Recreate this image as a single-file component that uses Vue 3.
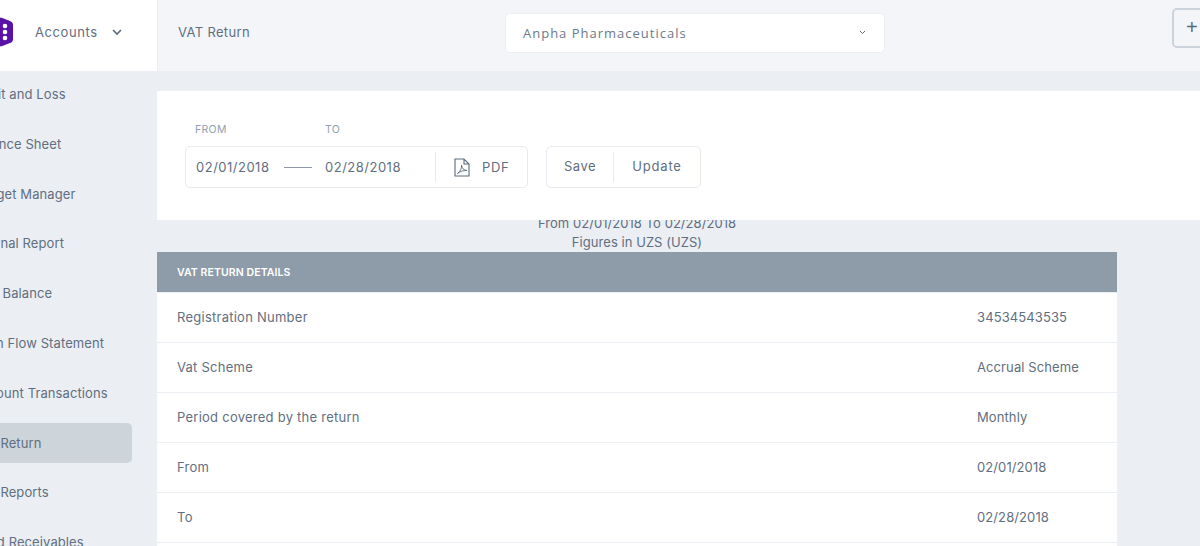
<script setup>
const navItems = [
  { label: 'Profit and Loss' },
  { label: 'Balance Sheet' },
  { label: 'Budget Manager' },
  { label: 'Journal Report' },
  { label: 'Trial Balance' },
  { label: 'Cash Flow Statement' },
  { label: 'Account Transactions' },
  { label: 'VAT Return', active: true },
  { label: 'VAT Reports' },
  { label: 'Aged Receivables' }
]
const rows = [
  ['Registration Number', '34534543535'],
  ['Vat Scheme', 'Accrual Scheme'],
  ['Period covered by the return', 'Monthly'],
  ['From', '02/01/2018'],
  ['To', '02/28/2018']
]
</script>

<template>
  <div class="page">
    <aside class="sidebar">
      <div class="brand">
        <svg class="logo" width="24" height="30" viewBox="0 0 24 30">
          <path d="M12 0.5 L21 4 Q24 5 24 8 L24 22 Q24 25 21 26 L12 29.5 L3 26 Q0 25 0 22 L0 8 Q0 5 3 4 Z" fill="#5a12a6" />
          <circle cx="16" cy="9" r="2.3" fill="#fff" />
          <circle cx="16" cy="15" r="2.3" fill="#fff" />
          <circle cx="16" cy="21" r="2.3" fill="#fff" />
        </svg>
        <span class="brand-name">Accounts</span>
        <svg class="brand-caret" width="10" height="7" viewBox="0 0 10 7">
          <path d="M1 1 L5 5 L9 1" fill="none" stroke="#5a6b7d" stroke-width="1.6" />
        </svg>
      </div>
      <nav class="nav">
        <a v-for="item in navItems" :key="item.label" class="nav-item" :class="{ active: item.active }">{{ item.label }}</a>
      </nav>
    </aside>

    <main class="main">
      <header class="topbar">
        <div class="page-title">VAT Return</div>
        <div class="company">
          <span>Anpha Pharmaceuticals</span>
          <svg width="7" height="5" viewBox="0 0 7 5">
            <path d="M1 1 L3.5 3.5 L6 1" fill="none" stroke="#5a6b7d" stroke-width="1" />
          </svg>
        </div>
        <button class="plus">+</button>
      </header>

      <section class="filters">
        <div class="field-labels">
          <span class="lab-from">FROM</span>
          <span>TO</span>
        </div>
        <div class="controls">
          <div class="group dates">
            <span class="date-a">02/01/2018</span>
            <span class="dash"></span>
            <span class="date-b">02/28/2018</span>
            <span class="sep"></span>
            <span class="pdf">
              <svg width="16" height="19" viewBox="0 0 16 19">
                <path d="M1 1 H10 L15 6 V18 H1 Z M10 1 V6 H15" fill="none" stroke="#5a6b7d" stroke-width="1.1" />
                <path d="M3.5 15.5 C6.5 13.5 8 9.5 7.5 7 C8 10.5 10 12.5 13 12.5 C10 12.2 6.5 13 3.5 15.5 Z" fill="none" stroke="#5a6b7d" stroke-width="0.9" />
              </svg>
              PDF
            </span>
          </div>
          <div class="group actions">
            <span class="act act-save">Save</span>
            <span class="sep"></span>
            <span class="act act-update">Update</span>
          </div>
        </div>
      </section>

      <section class="report">
        <div class="report-head">
          <div>From 02/01/2018 To 02/28/2018</div>
          <div>Figures in UZS (UZS)</div>
        </div>
        <div class="table">
          <div class="table-title">VAT RETURN DETAILS</div>
          <div v-for="r in rows" :key="r[0]" class="row">
            <span class="row-label">{{ r[0] }}</span>
            <span class="row-value">{{ r[1] }}</span>
          </div>
        </div>
      </section>
    </main>
  </div>
</template>

<style>
html, body { margin: 0; height: 100%; overflow: hidden; background: #ebeef3; }
</style>

<style scoped>
.page {
  display: flex;
  width: 1200px;
  height: 546px;
  overflow: hidden;
  background: #ebeef3;
  font-family: Inter, "Liberation Sans", sans-serif;
  font-size: 13px;
  color: #5f6f80;
}
.sidebar {
  width: 157px;
  flex: none;
  overflow: hidden;
}
.brand {
  height: 71px;
  background: #fff;
  display: flex;
  align-items: center;
  box-sizing: border-box;
  padding-bottom: 7px;
  margin-left: -11px;
}
.logo { flex: none; margin-right: 22px; }
.brand-name { letter-spacing: 0.6px; }
.brand-caret { margin-left: 14px; }
.nav {
  display: flex;
  flex-direction: column;
  gap: 9.8px;
  margin-left: -58px;
  padding-top: 3px;
}
.nav-item {
  height: 40px;
  width: 190px;
  line-height: 40px;
  padding-left: 30px;
  box-sizing: border-box;
  border-radius: 5px;
  white-space: nowrap;
  letter-spacing: 0.1px;
}
.nav-item.active { background: #cdd4da; }
.main {
  flex: 1;
  min-width: 0;
}
.topbar {
  height: 71px;
  background: #f4f5f8;
  display: flex;
  align-items: center;
  border-left: 1px solid #ebeef3;
  box-sizing: border-box;
  padding-bottom: 7px;
}
.page-title { margin-left: 20px; width: 327px; flex: none; letter-spacing: 0.35px; }
.company {
  width: 380px;
  height: 40px;
  flex: none;
  box-sizing: border-box;
  background: #fff;
  border: 1px solid #ebeef3;
  border-radius: 5px;
  display: flex;
  align-items: center;
  justify-content: space-between;
  padding: 0 18px 0 17px;
  font-family: "Open Sans", sans-serif;
  letter-spacing: 1px;
  color: #6b7a8a;
  margin-top: 1px;
}
.plus {
  margin-left: 287px;
  margin-top: -9px;
  width: 60px;
  height: 40px;
  flex: none;
  background: transparent;
  border: 2px solid #ccd3da;
  border-radius: 5px;
  color: #5a6b7d;
  font: 20px "Liberation Sans", sans-serif;
  text-align: left;
  padding-left: 12px;
}
.filters {
  position: relative;
  z-index: 1;
  margin-top: 20px;
  background: #fff;
  height: 129px;
  padding: 32px 0 0 28px;
  box-sizing: border-box;
}
.field-labels {
  display: flex;
  height: 23px;
  padding-left: 10px;
  font-size: 10.5px;
  letter-spacing: 0.3px;
  color: #919fae;
  line-height: 13px;
}
.lab-from { width: 130px; }
.controls { display: flex; gap: 18px; }
.group {
  display: flex;
  align-items: center;
  height: 42px;
  box-sizing: border-box;
  border: 1px solid #e6e9ee;
  border-radius: 5px;
}
.dates { width: 343px; padding-left: 10px; letter-spacing: 0.5px; }
.date-a { width: 88px; }
.dash { width: 28px; height: 1px; background: #8b97a4; margin-right: 13px; }
.date-b { width: 110px; }
.sep { width: 1px; height: 30px; background: #e6e9ee; flex: none; }
.pdf { display: flex; align-items: center; gap: 12px; margin-left: 18px; letter-spacing: 0.7px; }
.actions { width: 155px; }
.act { text-align: center; letter-spacing: 0.5px; margin-top: -2px; }
.act-save { width: 66px; }
.act-update { width: 86px; letter-spacing: 0.8px; }
.report { margin-top: -6px; }
.report-head {
  text-align: center;
  width: 960px;
  line-height: 19px;
  height: 38px;
  font-size: 13px;
  letter-spacing: 0.05px;
}
.table { width: 960px; background: #fff; min-height: 300px; }
.table-title {
  height: 41px;
  line-height: 41px;
  box-sizing: border-box;
  border-bottom: 1px solid #ebeef3;
  background: #8e9ba8;
  background-clip: padding-box;
  color: #fff;
  font-size: 10.5px;
  font-weight: 600;
  letter-spacing: 0.1px;
  padding-left: 20px;
}
.row {
  display: flex;
  height: 50px;
  box-sizing: border-box;
  align-items: center;
  border-bottom: 1px solid #ebeef3;
  padding: 0 0 2px 20px;
}
.row-label { width: 800px; letter-spacing: 0.25px; }
.row-value { letter-spacing: 0.1px; }
</style>
